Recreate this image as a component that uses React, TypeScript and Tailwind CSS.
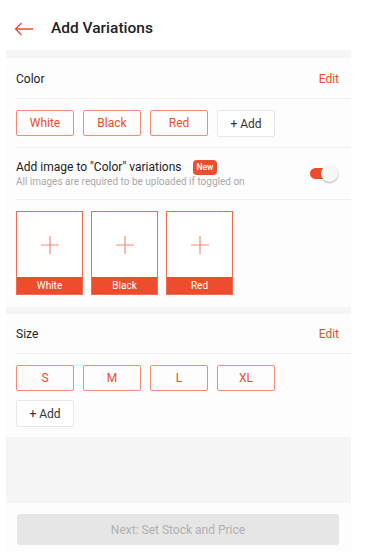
import React from "react";

const colors = ["White", "Black", "Red"];
const sizes = ["S", "M", "L", "XL"];

function Chip({ label }: { label: string }) {
  return (
    <div className="w-[58px] h-[26px] flex items-center justify-center border border-[#f58b77] rounded-[2px] text-[12px] text-[#ee4d2d]">
      {label}
    </div>
  );
}

function AddChip() {
  return (
    <div className="w-[58px] h-[27px] flex items-center justify-center border border-[#e8e8e8] rounded-[2px] bg-white text-[12px] text-[#333]">
      + Add
    </div>
  );
}

export default function App() {
  return (
    <div className="w-[370px] h-[560px] bg-white font-['Roboto',sans-serif] overflow-hidden">
      {/* Header */}
      <div className="h-[50px] pt-[8px] flex items-center">
        <svg width="20" height="14" viewBox="0 0 20 14" className="ml-[14px]" fill="none" stroke="#ee4d2d" strokeWidth="1.3">
          <path d="M19 7H1.5M7.5 1L1.5 7l6 6" />
        </svg>
        <span className="ml-[17px] text-[15.5px] font-medium text-[#222]">Add Variations</span>
      </div>

      <div className="ml-[6px] w-[345px] bg-[#f5f5f5] pt-2">
        {/* Color */}
        <div className="bg-[#fdfdfd] pl-[10px]">
          <div className="h-[41px] pt-[1px] flex items-center justify-between pr-3 border-b border-[#efefef]">
            <span className="text-[12px] text-[#222]">Color</span>
            <span className="text-[12px] text-[#ee4d2d]">Edit</span>
          </div>
          <div className="flex gap-[9px] pt-[11px] pb-[10px] border-b border-[#efefef]">
            {colors.map((c) => (
              <Chip key={c} label={c} />
            ))}
            <AddChip />
          </div>
          <div className="h-[52px] flex items-center justify-between pr-3 border-b border-[#efefef]">
            <div className="pt-[1px]">
              <div className="flex items-center gap-[11px] h-[16px]">
                <span className="text-[12px] text-[#222]">Add image to "Color" variations</span>
                <span className="h-[15px] px-[4px] rounded-[4px] bg-[#ee4d2d] text-white text-[8.5px] font-medium flex items-center">New</span>
              </div>
              <div className="text-[10px] leading-[14px] text-[#aaa]">All images are required to be uploaded if toggled on</div>
            </div>
            <div className="relative w-[28px] h-[17px] mr-[1px]">
              <div className="absolute left-0 top-[3px] w-[20px] h-[11px] rounded-full bg-[#ee4d2d]" />
              <div className="absolute right-0 top-0 w-[17px] h-[17px] rounded-full bg-[#f7f7f7] shadow-[0_1px_2px_rgba(0,0,0,0.3)]" />
            </div>
          </div>
          <div className="flex gap-[8px] pt-[11px] pb-[12px]">
            {colors.map((c) => (
              <div key={c} className="w-[67px] h-[84px] border border-[#f26a50] flex flex-col bg-white">
                <div className="flex-1 flex items-center justify-center">
                  <svg width="18" height="18" viewBox="0 0 18 18" stroke="#f58b77" strokeWidth="1.2">
                    <path d="M9 0v18M0 9h18" />
                  </svg>
                </div>
                <div className="h-[17px] bg-[#ee4d2d] text-white text-[10px] flex items-center justify-center">{c}</div>
              </div>
            ))}
          </div>
        </div>

        {/* Size */}
        <div className="bg-[#fdfdfd] pl-[10px] mt-[7px]">
          <div className="h-[40px] flex items-center justify-between pr-3 border-b border-[#efefef]">
            <span className="text-[12px] text-[#222]">Size</span>
            <span className="text-[12px] text-[#ee4d2d]">Edit</span>
          </div>
          <div className="flex flex-wrap gap-[9px] pt-[11px] pb-[9px]">
            {sizes.map((s) => (
              <Chip key={s} label={s} />
            ))}
          </div>
          <div className="pb-[10px]">
            <AddChip />
          </div>
        </div>

        <div className="h-[66px]" />

        {/* Bottom bar */}
        <div className="bg-[#fdfdfd] h-[50px] pt-[11px] pl-[11px] pr-3">
          <div className="h-[31px] rounded-[3px] bg-[#e6e6e6] flex items-center justify-center text-[12px] text-[#b0b0b0]">
            Next: Set Stock and Price
          </div>
        </div>
      </div>
    </div>
  );
}
